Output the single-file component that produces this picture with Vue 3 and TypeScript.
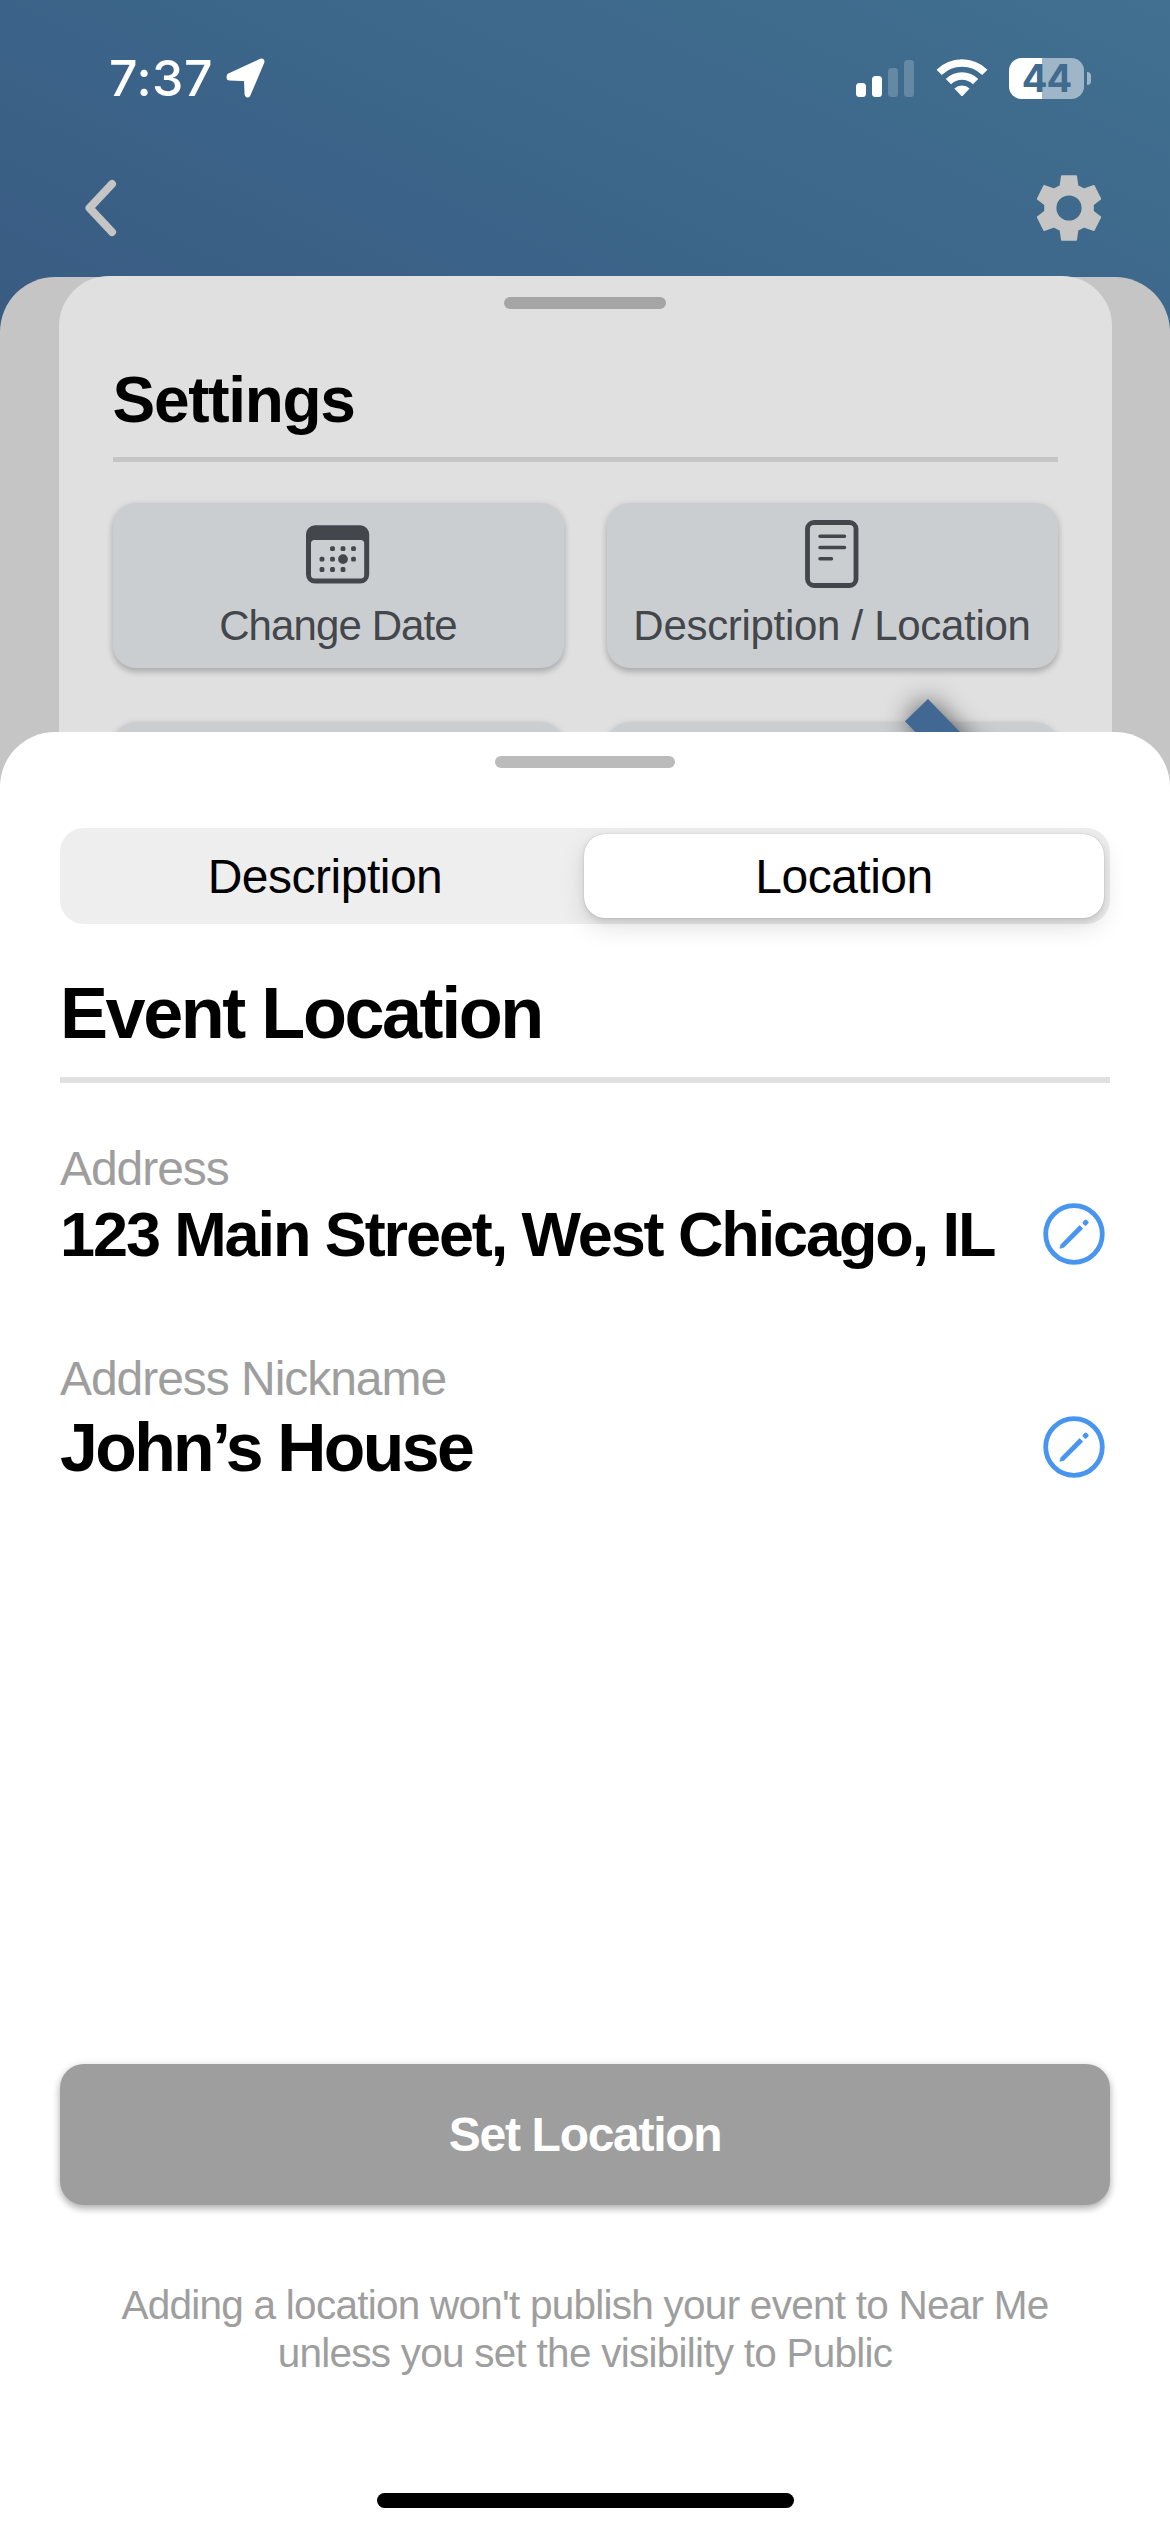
<script setup lang="ts">
import { ref } from 'vue'

interface Field {
  id: string
  label: string
  value: string
}

const tabs = ['Description', 'Location']
const activeTab = ref('Location')

const fields: Field[] = [
  { id: 'address', label: 'Address', value: '123 Main Street, West Chicago, IL' },
  { id: 'nickname', label: 'Address Nickname', value: 'John’s House' },
]

const signal = [
  { height: 14, on: true },
  { height: 21, on: true },
  { height: 29, on: false },
  { height: 37, on: false },
]

const dots = [
  [26.5, 23.7], [37, 23.7], [47.5, 23.7],
  [16, 34.1], [26.5, 34.1], [47.5, 34.1],
  [16, 44.5], [26.5, 44.5], [37, 44.5],
]
</script>

<template>
  <main class="screen">
    <header class="header">
      <div class="status">
        <div class="status-left">
          <span class="time">7:37</span>
          <svg class="locate" width="40" height="40" viewBox="0 0 40 40">
            <path d="M3.6 18.2 35.5 3.5 21.6 36.4 20.9 20.2 3.6 19.6Z" fill="#fff" stroke="#fff" stroke-width="6" stroke-linejoin="round" />
          </svg>
        </div>
        <div class="status-right">
          <div class="signal">
            <i v-for="bar in signal" :key="bar.height" :class="{ on: bar.on }" :style="{ height: bar.height + 'px' }"></i>
          </div>
          <svg class="wifi" width="52" height="38" viewBox="0 0 52 38">
            <g fill="none" stroke="#fff" stroke-width="7.4">
              <path d="M3.2 13.4A32.3 32.3 0 0 1 48.8 13.4" />
              <path d="M12.4 22.6A19.2 19.2 0 0 1 39.6 22.6" />
            </g>
            <path d="M18.4 29.6A11 11 0 0 1 33.6 29.6L26.8 36.7Q26 37.5 25.2 36.7Z" fill="#fff" />
          </svg>
          <div class="battery"><span>44</span></div>
          <i class="nub"></i>
        </div>
      </div>
      <nav class="nav">
        <svg width="40" height="60" viewBox="0 0 40 60" aria-label="Back">
          <path d="M32 8 9.5 32 32 56" transform="translate(0 -2)" fill="none" stroke="#c5c5c5" stroke-width="8" stroke-linecap="round" stroke-linejoin="round" />
        </svg>
        <svg width="68" height="68" viewBox="-34 -34 68 68" aria-label="Settings">
          <path
            fill="#c5c5c5" fill-rule="evenodd" stroke="#c5c5c5" stroke-width="1.6" stroke-linejoin="round"
            d="M-7.2-32H7.2L8.6-22 15-18.8 24.9-22.2 31.4-9.2 24-3.4V3.4L31.4 9.2 24.9 22.2 15 18.8 8.6 22 7.2 32H-7.2L-8.6 22-15 18.8-24.9 22.2-31.4 9.2-24 3.4V-3.4L-31.4-9.2-24.9-22.2-15-18.8-8.6-22ZM0-13.4A13.4 13.4 0 1 0 0 13.4A13.4 13.4 0 1 0 0-13.4Z"
          />
        </svg>
      </nav>
    </header>

    <section class="backdrop">
      <div class="settings">
        <div class="grabber small"></div>
        <h2>Settings</h2>
        <div class="grid">
          <button class="tile">
            <svg width="64" height="70" viewBox="0 0 64 70">
              <path
                fill="#43464a" fill-rule="evenodd"
                d="M9 0.3H54.2A9 9 0 0 1 63.2 9.3V49.6A9 9 0 0 1 54.2 58.6H9A9 9 0 0 1 0 49.6V9.3A9 9 0 0 1 9 .3ZM8.5 15A3.5 3.5 0 0 0 5 18.5V50A3.5 3.5 0 0 0 8.5 53.5H54.7A3.5 3.5 0 0 0 58.2 50V18.5A3.5 3.5 0 0 0 54.7 15Z"
              />
              <rect v-for="([x, y], i) in dots" :key="i" :x="x - 2.4" :y="y - 2.4" width="4.8" height="4.8" rx="1.5" fill="#43464a" />
              <circle cx="37" cy="34.1" r="4.9" fill="#43464a" />
            </svg>
            <span>Change Date</span>
          </button>
          <button class="tile">
            <svg width="54" height="80" viewBox="0 0 54 80">
              <g fill="none" stroke="#43464a" stroke-linecap="round">
                <rect x="2.5" y="7.5" width="48.5" height="63" rx="6.5" stroke-width="4.8" />
                <path d="M15 21.3H39.5M15 32.5H39.5M15 43.7H26.5" stroke-width="3.5" />
              </g>
            </svg>
            <span class="wide">Description / Location</span>
          </button>
          <div class="tile"></div>
          <div class="tile"></div>
        </div>
        <div class="ribbon"></div>
      </div>
    </section>

    <section class="sheet">
      <div class="grabber"></div>
      <div class="tabs">
        <button v-for="tab in tabs" :key="tab" :class="{ active: tab === activeTab }" @click="activeTab = tab">
          {{ tab }}
        </button>
      </div>
      <h1>Event Location</h1>
      <div v-for="field in fields" :key="field.id" class="field" :class="field.id">
        <label>{{ field.label }}</label>
        <div class="row">
          <strong>{{ field.value }}</strong>
          <svg width="62" height="62" viewBox="0 0 62 62" aria-label="Edit">
            <circle cx="31" cy="31" r="28.3" fill="none" stroke="#4895ef" stroke-width="4.8" />
            <path d="M16.9 45.3 18 41.5 36.6 22.6 39.7 25.7 21 44.2Z" fill="#4895ef" stroke="#4895ef" stroke-width=".8" stroke-linejoin="round" />
            <rect x="-2.7" y="-2.5" width="5.4" height="5" rx="1.5" transform="translate(42.6 19.6) rotate(-45)" fill="#4895ef" />
          </svg>
        </div>
      </div>
      <button class="submit">Set Location</button>
      <p class="note">Adding a location won't publish your event to Near Me<br />unless you set the visibility to Public</p>
      <div class="home"></div>
    </section>
  </main>
</template>

<style>
body {
  margin: 0;
}
</style>

<style scoped>
.screen {
  width: 1170px;
  height: 2532px;
  display: flex;
  flex-direction: column;
  overflow: hidden;
  background: linear-gradient(205deg, #417090 0, #3c658a 420px, #395b82 800px) no-repeat 0 0 / 1170px 350px #fff;
  font-family: 'Liberation Sans', Arial, sans-serif;
  color: #000;
}

button {
  border: 0;
  padding: 0;
  margin: 0;
  background: none;
  font: inherit;
  color: inherit;
}

svg {
  display: block;
  flex: none;
}

.header {
  height: 277px;
  flex: none;
}

.status {
  height: 156px;
  box-sizing: border-box;
  padding: 0 79px 0 109px;
  display: flex;
  justify-content: space-between;
  align-items: center;
  font-family: Inter, sans-serif;
}

.status-left,
.status-right {
  display: flex;
  align-items: center;
}

.time {
  font-size: 50px;
  line-height: 60px;
  font-weight: 500;
  letter-spacing: 0.5px;
  color: #fff;
}

.locate {
  margin-left: 13px;
}

.signal {
  display: flex;
  align-items: flex-end;
  gap: 6px;
  height: 37px;
}

.signal i {
  width: 10px;
  border-radius: 3.5px;
  background: rgba(255, 255, 255, 0.2);
}

.signal i.on {
  background: #fff;
}

.wifi {
  margin-left: 21.5px;
}

.battery {
  margin-left: 21.5px;
  width: 75px;
  height: 41px;
  border-radius: 12.5px;
  background: linear-gradient(90deg, #fff 33px, #9fb5c8 33px);
  display: flex;
  justify-content: center;
  align-items: center;
}

.battery span {
  font-size: 38px;
  line-height: 41px;
  font-weight: 700;
  letter-spacing: -1px;
  color: #406b8e;
}

.nub {
  margin-left: 3px;
  width: 4px;
  height: 13px;
  border-radius: 0 5px 5px 0;
  background: #9fb5c8;
}

.nav {
  height: 104px;
  padding: 0 67px 0 80px;
  display: flex;
  justify-content: space-between;
  align-items: center;
}

.backdrop {
  flex: none;
  height: 523px;
  border-radius: 55px 55px 0 0;
  background: #c5c5c5;
}

.settings {
  position: relative;
  top: -1px;
  height: 524px;
  box-sizing: border-box;
  margin: 0 58.5px;
  padding: 21px 54px 0;
  border-radius: 50px 50px 0 0;
  background: #e0e0e0;
  overflow: hidden;
}

.grabber {
  width: 180px;
  height: 12px;
  margin: 0 auto;
  border-radius: 6px;
  background: #bbb;
}

.grabber.small {
  width: 162px;
  background: #a5a5a5;
}

h1,
h2 {
  margin: 0;
  font-weight: 700;
  white-space: nowrap;
}

h2 {
  margin-top: 56px;
  padding-bottom: 22px;
  border-bottom: 5px solid #c5c5c5;
  font-size: 64px;
  line-height: 70px;
  letter-spacing: -1.3px;
}

.grid {
  display: grid;
  grid-template-columns: 1fr 1fr;
  grid-auto-rows: 164.5px;
  gap: 54px 43px;
  margin-top: 41px;
}

.tile {
  box-sizing: border-box;
  border-radius: 23px;
  background: #cbced1;
  box-shadow: 0 4px 6px rgba(0, 0, 0, 0.2), 0 1px 8px rgba(0, 0, 0, 0.08);
  display: flex;
  flex-direction: column;
  align-items: center;
  justify-content: flex-end;
  padding-bottom: 18px;
  color: #43464a;
  font-size: 42px;
  line-height: 48px;
  letter-spacing: -0.9px;
  white-space: nowrap;
}

.tile svg {
  margin-bottom: 6.5px;
}

.tile .wide {
  letter-spacing: -0.3px;
}

/* Tail of the diagonal badge peeking over the second row of tiles */
.ribbon {
  position: absolute;
  left: 869px;
  top: 423px;
  width: 120px;
  height: 32px;
  background: #416793;
  transform-origin: 0 0;
  transform: rotate(46deg);
  box-shadow: 0 0 26px rgba(0, 0, 0, 0.62);
}

.sheet {
  position: relative;
  flex: 1;
  margin-top: -68px;
  padding: 24px 60px 0;
  border-radius: 55px 55px 0 0;
  background: #fff;
  display: flex;
  flex-direction: column;
}

.tabs {
  flex: none;
  height: 96px;
  margin-top: 60px;
  box-sizing: border-box;
  padding: 6px;
  border-radius: 24px;
  background: #eee;
  display: grid;
  grid-template-columns: 518px 520px;
}

.tabs button {
  border-radius: 21px;
  padding-top: 1px;
  font-size: 48px;
  line-height: 83px;
  letter-spacing: -0.5px;
}

.tabs .active {
  background: #fff;
  box-shadow: 0 9px 24px rgba(0, 0, 0, 0.12), 0 3px 6px rgba(0, 0, 0, 0.1), 0 0 1px rgba(0, 0, 0, 0.3);
}

h1 {
  margin-top: 49px;
  padding-bottom: 24px;
  border-bottom: 6px solid #e0e0e0;
  font-size: 72px;
  line-height: 80px;
  letter-spacing: -2.45px;
}

.field {
  display: flex;
  flex-direction: column;
}

.field label {
  font-size: 48px;
  line-height: 56px;
  letter-spacing: -1.05px;
  color: #9e9e9e;
}

.row {
  display: flex;
  align-items: center;
  justify-content: space-between;
  padding-right: 5px;
  white-space: nowrap;
}

.address {
  margin-top: 58px;
}

.address strong {
  font-size: 63px;
  line-height: 74px;
  letter-spacing: -2.1px;
}

.row svg {
  margin-top: -1px;
}

.nickname {
  margin-top: 80px;
}

.nickname strong {
  font-size: 68px;
  line-height: 80px;
  letter-spacing: -2.6px;
}

.submit {
  flex: none;
  height: 141px;
  margin-top: auto;
  border-radius: 24px;
  background: #9e9e9e;
  box-shadow: 0 4px 7px rgba(0, 0, 0, 0.25), 0 1px 10px rgba(0, 0, 0, 0.1);
  color: #fff;
  font-size: 48px;
  font-weight: 700;
  letter-spacing: -1.3px;
}

.note {
  margin: 76px -40px 0;
  text-align: center;
  font-size: 40.5px;
  line-height: 48px;
  letter-spacing: -0.75px;
  color: #9e9e9e;
}

.home {
  flex: none;
  width: 417px;
  height: 15px;
  margin: 116px auto 24px;
  border-radius: 8px;
  background: #000;
}
</style>
